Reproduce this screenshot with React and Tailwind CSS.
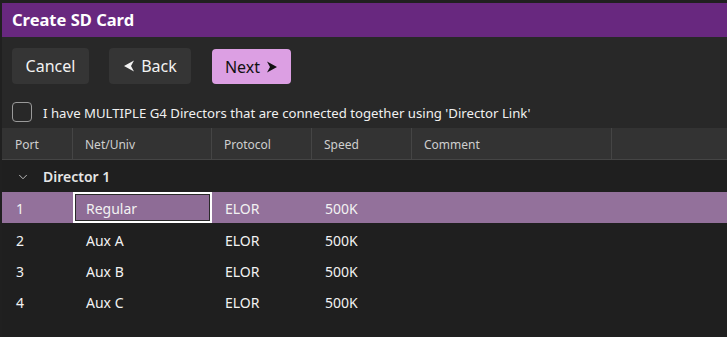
import { ChevronDown } from 'lucide-react';

const rows = [
  { port: '1', net: 'Regular', protocol: 'ELOR', speed: '500K', selected: true },
  { port: '2', net: 'Aux A', protocol: 'ELOR', speed: '500K' },
  { port: '3', net: 'Aux B', protocol: 'ELOR', speed: '500K' },
  { port: '4', net: 'Aux C', protocol: 'ELOR', speed: '500K' },
];

function Arrow({ dir, color }) {
  const d = dir === 'left' ? 'M1 6 L11 0.5 L8 6 L11 11.5 Z' : 'M11 6 L1 0.5 L4 6 L1 11.5 Z';
  return (
    <svg width="12" height="12" viewBox="0 0 12 12" className="shrink-0">
      <path d={d} fill={color} />
    </svg>
  );
}

export default function App() {
  const font = { fontFamily: '"Noto Sans", "Open Sans", sans-serif' };

  return (
    <div className="w-[727px] h-[337px] bg-[#202020] pt-[3px] pl-[2px] flex flex-col overflow-hidden" style={font}>
      {/* Title */}
      <div className="h-[34px] shrink-0 bg-[#68287f] px-[10px] flex items-center">
        <span className="text-white font-bold text-[16.5px] leading-none">Create SD Card</span>
      </div>

      <div className="flex-1 bg-[#282828] flex flex-col">
        {/* Buttons */}
        <div className="flex pt-[11px] pl-[10px]">
          <button className="w-[77px] h-[36px] rounded-[4px] bg-[#353535] text-[#f2f2f2] text-[16px]">
            Cancel
          </button>
          <button className="ml-[20px] w-[82px] h-[36px] rounded-[4px] bg-[#353535] text-[#f2f2f2] text-[16px] flex items-center justify-center gap-[6px]">
            <Arrow dir="left" color="#f2f2f2" />
            Back
          </button>
          <button className="ml-[21px] mt-[1px] w-[79px] h-[35px] rounded-[4px] bg-[#dc9fe3] text-[#111] text-[16px] flex items-center justify-center gap-[6px]">
            Next
            <Arrow dir="right" color="#111" />
          </button>
        </div>

        {/* Checkbox */}
        <div className="flex items-center pl-[10px] mt-[18px] h-[20px]">
          <div className="w-[20px] h-[20px] rounded-[4px] border border-[#9a9a9a]" />
          <span className="ml-[11px] pt-[3px] text-[13.2px] text-[#f0f0f0]">
            I have MULTIPLE G4 Directors that are connected together using 'Director Link'
          </span>
        </div>

        {/* Table */}
        <div className="mt-[6px] flex-1 bg-[#1f1f1f] flex flex-col">
          <div className="h-[32px] bg-[#333333] border-b border-[#454545] flex text-[12px] text-[#cfcfcf]">
            <div className="w-[71px] pl-[13px] pt-[2px] flex items-center border-r border-[#454545]">Port</div>
            <div className="w-[139px] pl-[12px] pt-[2px] flex items-center border-r border-[#454545]">Net/Univ</div>
            <div className="w-[100px] pl-[12px] pt-[2px] flex items-center border-r border-[#454545]">Protocol</div>
            <div className="w-[100px] pl-[12px] pt-[2px] flex items-center border-r border-[#454545]">Speed</div>
            <div className="w-[200px] pl-[12px] pt-[2px] flex items-center border-r border-[#454545]">Comment</div>
            <div className="flex-1" />
          </div>

          <div className="h-[32px] flex items-center pl-[14px] pt-[1px] text-[#e6e6e6]">
            <ChevronDown size={14} strokeWidth={1.5} className="text-[#cfcfcf]" />
            <span className="ml-[13px] text-[14px] font-semibold">Director 1</span>
          </div>

          {rows.map((r) => (
            <div
              key={r.port}
              className={`h-[31px] flex items-center text-[14px] text-[#f2f2f2] ${r.selected ? 'bg-[#93719b]' : 'pt-[3px]'}`}
            >
              <div className={`w-[71px] pl-[14px] ${r.selected ? 'pt-[2px]' : ''}`}>{r.port}</div>
              {r.selected ? (
                <div className="w-[139px] h-[31px] border-2 border-white shadow-[inset_0_0_0_1px_#2a2a2a] bg-[#8e6c96] pl-[11px] pt-[1px] flex items-center">
                  {r.net}
                </div>
              ) : (
                <div className="w-[139px] pl-[13px]">{r.net}</div>
              )}
              <div className={`w-[100px] pl-[13px] ${r.selected ? 'pt-[2px]' : ''}`}>{r.protocol}</div>
              <div className={`w-[100px] pl-[13px] ${r.selected ? 'pt-[2px]' : ''}`}>{r.speed}</div>
            </div>
          ))}
        </div>
      </div>
    </div>
  );
}
